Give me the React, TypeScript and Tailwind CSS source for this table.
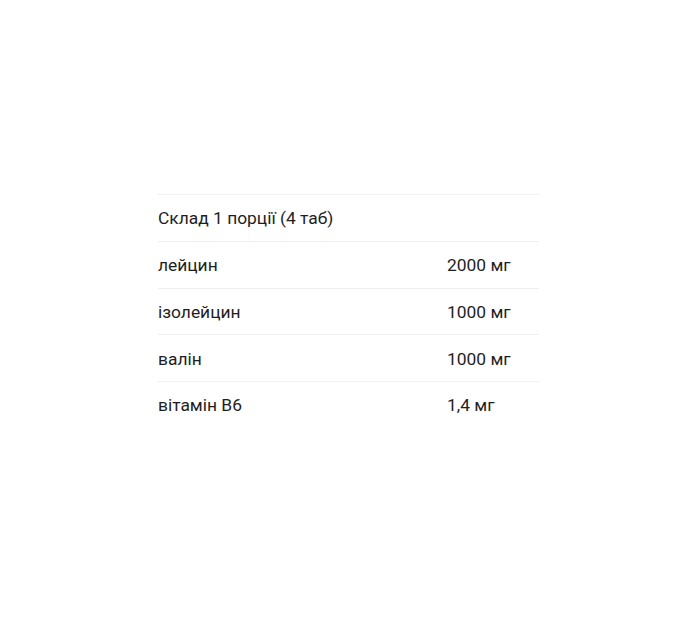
export default function App() {
  const rows = [
    { name: "лейцин", value: "2000 мг" },
    { name: "ізолейцин", value: "1000 мг" },
    { name: "валін", value: "1000 мг" },
    { name: "вітамін В6", value: "1,4 мг" },
  ];

  return (
    <div className="min-h-[630px] bg-white pt-[194px] pl-[158px] font-['Roboto',sans-serif] text-[17.4px] text-[#1e1e1e]">
      <div className="w-[381px]">
        {/* header row */}
        <div className="flex h-[46.75px] items-center border-t border-[#efefef] pt-[1px]">
          <span>Склад 1 порції (4 таб)</span>
        </div>
        {rows.map((row) => (
          <div
            key={row.name}
            className="flex h-[46.75px] items-center border-t border-[#efefef] pt-[1px]"
          >
            <span className="w-[289px]">{row.name}</span>
            <span>{row.value}</span>
          </div>
        ))}
      </div>
    </div>
  );
}
